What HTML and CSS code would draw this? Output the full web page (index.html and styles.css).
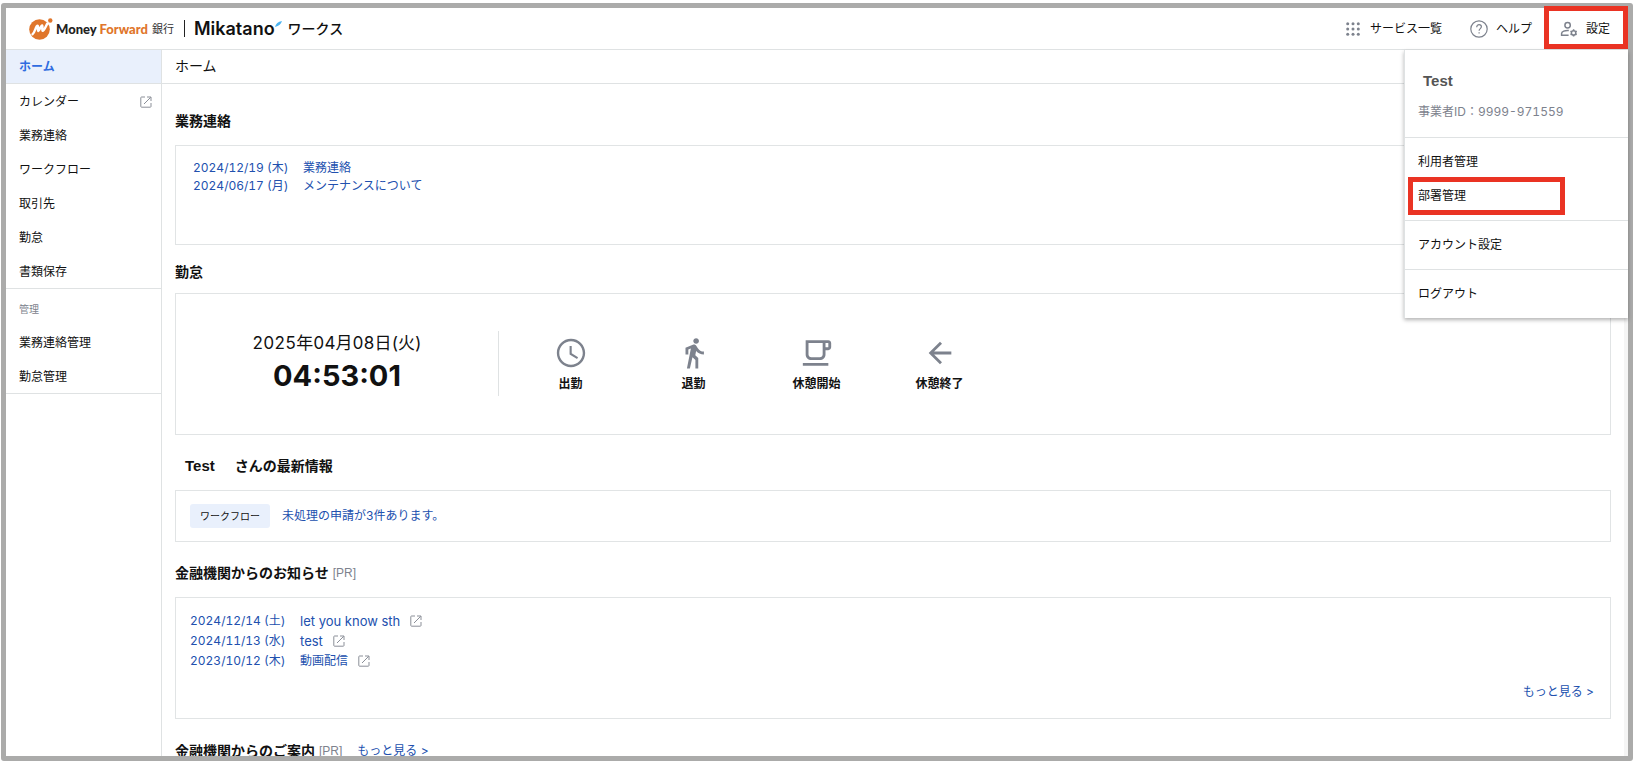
FILE: index.html
```html
<!DOCTYPE html>
<html lang="ja">
<head>
<meta charset="utf-8">
<title>Mikatano ワークス</title>
<link rel="stylesheet" href="styles.css">
</head>
<body>
<svg class="sprite" aria-hidden="true">
  <symbol id="i-ext" viewBox="0 0 12 12"><path d="M5 1H1.500a.7.7 0 0 0-.7.7v8.800c0 .4.3.7.7.7h8.800c.4 0 .7-.3.7-.7V7M7 1h4v4M10.700 1.300 4 8" fill="none" stroke="currentColor" stroke-width="1"/></symbol>
</svg>
<div class="window">
  <header class="header">
    <a class="brand" href="#">
      <svg class="brand-mark" viewBox="0 0 24 22" aria-hidden="true">
        <circle cx="10.500" cy="11.500" r="10.300" fill="#e0762b"/>
        <circle cx="21.300" cy="2.500" r="2.200" fill="#e0762b"/>
        <path d="M3.500 16.200c1.300-.8 2-2.600 2.800-4.800.7-2 1.500-3.600 2.300-3.600 1 0-.3 5 .8 5.200 1 .2 2.300-5.800 3.700-5.600 1.200.2-.6 5.200.6 5.400 1.300.1 2.700-3.600 4.600-7.200" fill="none" stroke="#fff" stroke-width="2.400" stroke-linecap="round" stroke-linejoin="round"/>
      </svg>
      <span class="brand-name">Money <span class="brand-accent">Forward</span></span>
      <span class="brand-bank">銀行</span>
      <span class="brand-rule"></span>
      <span class="product">Mikatano</span>
      <svg class="product-tick" viewBox="0 0 6 5" aria-hidden="true"><path d="M0 5C.8 2.500 2.500.6 6 0 5.200 2.600 3.500 4.300 0 5z" fill="#4db4f0"/></svg>
      <span class="product-sub">ワークス</span>
    </a>
    <nav class="tools">
      <button class="tool" type="button">
        <svg class="tool-icon" viewBox="0 0 18 18" fill="#7d828d" aria-hidden="true"><circle cx="3.700" cy="3.700" r="1.500"/><circle cx="9" cy="3.700" r="1.500"/><circle cx="14.300" cy="3.700" r="1.500"/><circle cx="3.700" cy="9" r="1.500"/><circle cx="9" cy="9" r="1.500"/><circle cx="14.300" cy="9" r="1.500"/><circle cx="3.700" cy="14.300" r="1.500"/><circle cx="9" cy="14.300" r="1.500"/><circle cx="14.300" cy="14.300" r="1.500"/></svg>
        サービス一覧
      </button>
      <button class="tool" type="button">
        <svg class="tool-icon" viewBox="0 0 18 18" fill="none" stroke="#7d828d" stroke-width="1.200" aria-hidden="true"><circle cx="9" cy="9" r="8.200"/><path d="M6.700 7.200c0-1.500 1-2.500 2.400-2.500s2.300.9 2.300 2.100c0 1.700-2.300 1.900-2.300 3.900"/><path d="M9.100 12.200v1.400"/></svg>
        ヘルプ
      </button>
      <button class="tool tool-settings" type="button">
        <svg class="tool-icon" viewBox="0 0 18 18" fill="none" stroke="#7d828d" stroke-width="1.500" aria-hidden="true"><circle cx="7.600" cy="5.200" r="2.700"/><path d="M8.800 10.600c-3.800-.4-7.200.9-7.200 2.900v1.700h7"/><path d="M13.600 9.300v1.400M13.600 15.100v1.400M10.500 11.100l1.200.7M15.500 14l1.200.7M10.500 14.700l1.200-.7M15.500 11.800l1.200-.7"/><circle cx="13.600" cy="12.900" r="2.200"/></svg>
        設定
      </button>
    </nav>
  </header>

  <div class="layout">
    <nav class="sidebar">
      <ul class="menu">
        <li><a class="menu-item is-active" href="#">ホーム</a></li>
        <li><a class="menu-item" href="#">カレンダー<svg class="ext"><use href="#i-ext"/></svg></a></li>
        <li><a class="menu-item" href="#">業務連絡</a></li>
        <li><a class="menu-item" href="#">ワークフロー</a></li>
        <li><a class="menu-item" href="#">取引先</a></li>
        <li><a class="menu-item" href="#">勤怠</a></li>
        <li><a class="menu-item" href="#">書類保存</a></li>
      </ul>
      <div class="menu-label">管理</div>
      <ul class="menu">
        <li><a class="menu-item" href="#">業務連絡管理</a></li>
        <li><a class="menu-item" href="#">勤怠管理</a></li>
      </ul>
    </nav>

    <main class="main">
      <h1 class="page-title">ホーム</h1>
      <div class="content">
        <section>
          <h2 class="heading">業務連絡</h2>
          <ul class="card card-notices">
            <li><a class="link" href="#"><time class="date">2024/12/19 (木)</time>業務連絡</a></li>
            <li><a class="link" href="#"><time class="date">2024/06/17 (月)</time>メンテナンスについて</a></li>
          </ul>
        </section>

        <section>
          <h2 class="heading heading-tight">勤怠</h2>
          <div class="card card-attendance">
            <div class="now">
              <div class="now-date">2025年04月08日(火)</div>
              <div class="now-time">04:53:01</div>
            </div>
            <div class="stamps">
              <button class="stamp" type="button"><svg viewBox="0 0 24 24"><path d="M11.990 2C6.470 2 2 6.480 2 12s4.470 10 9.990 10C17.520 22 22 17.520 22 12S17.520 2 11.990 2zM12 20.300c-4.600 0-8.300-3.700-8.300-8.300S7.400 3.700 12 3.700s8.300 3.700 8.300 8.300-3.700 8.300-8.300 8.300zM12.500 7H11v6l5.250 3.150.75-1.230-4.500-2.670z"/></svg>出勤</button>
              <button class="stamp" type="button"><svg viewBox="0 0 24 24"><path d="M13.500 5.500c1.100 0 2-.9 2-2s-.9-2-2-2-2 .9-2 2 .9 2 2 2zM9.800 8.900L7 23h2.100l1.800-8 2.100 2v6h2v-7.500l-2.100-2 .6-3C14.800 12 16.800 13 19 13v-2c-1.900 0-3.500-1-4.300-2.400l-1-1.600c-.4-.6-1-1-1.700-1-.3 0-.5.1-.8.1L6 8.300V13h2V9.600l1.800-.7"/></svg>退勤</button>
              <button class="stamp" type="button"><svg viewBox="0 0 24 24"><path fill-rule="evenodd" d="M16 5v8c0 1.100-.9 2-2 2H8c-1.100 0-2-.9-2-2V5h10m4-2H4v10c0 2.210 1.790 4 4 4h6c2.210 0 4-1.790 4-4v-3h2c1.110 0 2-.9 2-2V5c0-1.110-.89-2-2-2zm-2 5V5h2v3h-2zm2 11H2v2h18v-2z"/></svg>休憩開始</button>
              <button class="stamp" type="button"><svg viewBox="0 0 24 24"><path d="M20 11H7.830l5.590-5.590L12 4l-8 8 8 8 1.410-1.410L7.830 13H20v-2z"/></svg>休憩終了</button>
            </div>
          </div>
        </section>

        <section>
          <h2 class="heading"><span class="user">Test</span>さんの最新情報</h2>
          <div class="card card-latest">
            <span class="badge">ワークフロー</span>
            <a class="link" href="#">未処理の申請が3件あります。</a>
          </div>
        </section>

        <section>
          <h2 class="heading">金融機関からのお知らせ<span class="pr">[PR]</span></h2>
          <div class="card card-news">
            <ul class="news">
              <li><a class="link" href="#"><time class="date">2024/12/14 (土)</time><span class="latin">let you know sth</span><svg class="ext"><use href="#i-ext"/></svg></a></li>
              <li><a class="link" href="#"><time class="date">2024/11/13 (水)</time><span class="latin">test</span><svg class="ext"><use href="#i-ext"/></svg></a></li>
              <li><a class="link" href="#"><time class="date">2023/10/12 (木)</time>動画配信<svg class="ext"><use href="#i-ext"/></svg></a></li>
            </ul>
            <a class="link more" href="#">もっと見る &gt;</a>
          </div>
        </section>

        <section>
          <h2 class="heading">金融機関からのご案内<span class="pr">[PR]</span><a class="link heading-more" href="#">もっと見る &gt;</a></h2>
        </section>
      </div>
    </main>
  </div>

  <div class="dropdown">
    <div class="account">
      <div class="account-name">Test</div>
      <div class="account-id">事業者ID：9999-971559</div>
    </div>
    <div class="group">
      <a class="option" href="#">利用者管理</a>
      <a class="option option-marked" href="#">部署管理</a>
    </div>
    <div class="group"><a class="option" href="#">アカウント設定</a></div>
    <div class="group"><a class="option" href="#">ログアウト</a></div>
  </div>
</div>
</body>
</html>
```
FILE: styles.css
```css
* { box-sizing: border-box; }
body {
  margin: 0;
  padding: 3px 1px;
  height: 100vh;
  background: #fff;
  color: #111;
  font: 12px/18px Inter, "Noto Sans CJK JP", sans-serif;
}
ul { list-style: none; margin: 0; padding: 0; }
a { color: inherit; text-decoration: none; }
button { border: 0; padding: 0; background: none; color: inherit; font: inherit; cursor: pointer; }
.sprite { display: none; }

.window {
  position: relative;
  display: flex;
  flex-direction: column;
  height: 100%;
  border: 5px solid #ababaa;
  border-radius: 3px;
}
.header {
  display: flex;
  justify-content: space-between;
  align-items: stretch;
  height: 42px;
  flex: none;
  border-bottom: 1px solid #dfe2e3;
}
.brand { display: flex; align-items: center; padding-left: 23px; white-space: nowrap; }
.brand-mark { width: 24px; height: 22px; margin-right: 3px; }
.brand-name { font: 900 13px/18px Lato, sans-serif; color: #222; }
.brand-accent { color: #e0762b; }
.brand-bank { margin-left: 4px; font-size: 11px; color: #333; }
.brand-rule { width: 1px; height: 17px; margin: 0 9px 0 10px; background: #222; }
.product { font: 600 18px/20px Inter, sans-serif; color: #111; }
.product-tick { width: 7px; height: 6px; margin-bottom: 10px; }
.product-sub { margin-left: 6px; font-size: 14px; font-weight: 500; }

.tools { display: flex; }
.tool { display: flex; align-items: center; gap: 8px; margin-right: 28px; white-space: nowrap; }
.tool-icon { width: 18px; height: 18px; }
.tool:nth-child(2) { margin-right: 12px; }
.tool-settings { position: relative; margin: 0; padding: 0 18px 0 16px; }
.tool-settings::after {
  content: "";
  position: absolute;
  inset: -2px 0 0 0;
  border: 5px solid #ea3323;
}

.layout { display: flex; flex: 1; min-height: 0; overflow: hidden; }
.sidebar { flex: none; width: 156px; border-right: 1px solid #dfe2e3; }
.menu { border-bottom: 1px solid #dfe2e3; }
.menu-item {
  display: flex;
  align-items: center;
  justify-content: space-between;
  padding: 9px 9px 7px 13px;
}
.menu-item.is-active {
  background: #e9f0fc;
  border-bottom: 1px solid #dfe2e3;
  color: #2f6ce0;
  font-weight: 700;
  padding: 8px 13px 7px;
}
.menu-label { padding: 10px 13px 6px; font-size: 10px; line-height: 20px; color: #7d828d; }
.ext { width: 12px; height: 12px; color: #8b8f98; }

.main { flex: 1; min-width: 0; border-right: 4px solid #f5f5f5; }
.page-title {
  margin: 0;
  padding: 6px 13px 7px;
  border-bottom: 1px solid #dfe2e3;
  font-size: 14px;
  line-height: 20px;
  font-weight: 400;
}
.content { padding: 27px 13px 0 13px; }
.heading {
  display: flex;
  align-items: center;
  margin: 0 0 14px;
  font-size: 14px;
  line-height: 20px;
  font-weight: 700;
}
.heading-tight { margin-bottom: 11px; }
.user { padding: 0 20px 0 10px; font-family: "Liberation Sans", sans-serif; font-size: 15px; }
.pr { margin-left: 4px; font: 400 12px/20px "Liberation Sans", sans-serif; color: #7d828d; }
.heading-more { margin-left: 15px; font-size: 12px; font-weight: 400; }
.card { margin-bottom: 21px; border: 1px solid #e1e4e5; }
.link { color: #2150ae; }
.date { display: inline-block; min-width: 110px; }
.date, .account-id, .now-date { font-variant-numeric: tabular-nums; }
.latin { font-size: 13px; }

.card-notices { min-height: 100px; margin-bottom: 17px; padding: 13px 17px; }
.card-attendance { display: flex; padding: 37px 0 38px; }
.now {
  display: flex;
  flex-direction: column;
  align-items: center;
  width: 323px;
  border-right: 1px solid #dfe2e3;
}
.now-date { font-size: 17px; line-height: 24px; }
.now-time { font-size: 29px; line-height: 41px; font-weight: 700; }
.stamps { display: flex; padding-left: 10px; }
.stamp {
  display: flex;
  flex-direction: column;
  align-items: center;
  width: 123px;
  padding-top: 5px;
  gap: 5px;
  font-weight: 700;
}
.stamp svg { width: 34px; height: 34px; fill: #7d828d; }
.card-latest { display: flex; align-items: center; gap: 12px; padding: 13px 14px; }
.badge { padding: 0 10px; border-radius: 3px; background: #e9f0fc; font-size: 10px; line-height: 24px; }
.card-news { display: flex; flex-direction: column; padding: 13px 16px 17px 14px; margin-bottom: 22px; }
.news .link { display: flex; align-items: center; min-height: 20px; }
.news .ext { margin-left: 10px; }
.more { align-self: flex-end; margin-top: 12px; }

.dropdown {
  position: absolute;
  top: 42px;
  right: 0;
  width: 224px;
  background: #fff;
  border-left: 1px solid #dfe2e3;
  box-shadow: 0 2px 4px rgba(0, 0, 0, 0.3);
}
.account { padding: 20px 13px 16px; }
.account-name { padding-left: 5px; font: 700 15px/22px "Liberation Sans", sans-serif; color: #555; }
.account-id { padding-top: 11px; color: #7d828d; }
.group { padding: 7px 0; border-top: 1px solid #dfe2e3; }
.option { position: relative; display: block; padding: 8px 13px; }
.option-marked::after {
  content: "";
  position: absolute;
  inset: -2px 63px -2px 3px;
  border: 5px solid #ea3323;
}
```
